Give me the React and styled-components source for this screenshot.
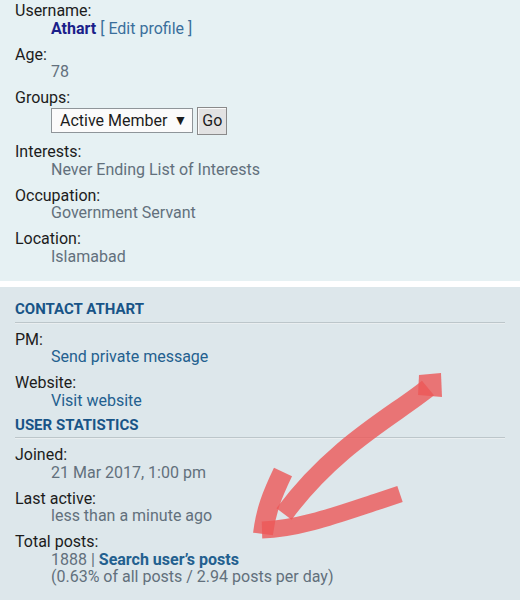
import styled, {createGlobalStyle} from 'styled-components';

const GlobalStyle = createGlobalStyle`
  html, body {
    margin: 0;
    padding: 0;
    background: #ffffff;
  }
  body {
    font-family: Roboto, "Noto Sans", "Liberation Sans", sans-serif;
    font-size: 16px;
    color: #1c1c1c;
  }
`;

const Page = styled.div`
  position: relative;
  width: 520px;
  height: 600px;
  overflow: hidden;
`;

const Panel = styled.div`
  background: ${(p) => p.$tone === 'dark' ? '#dde7eb' : '#e6f1f3'};
  padding: ${(p) => p.$tone === 'dark' ? '14px 15px 14px' : '2px 15px 16px'};
  margin-bottom: 6px;
`;

const List = styled.dl`
  margin: 0;
  line-height: 17.5px;
`;

const Label = styled.dt`
  color: #1c1c1c;
`;

const Value = styled.dd`
  margin: 0 0 8.5px 36px;
  color: #62707c;
  &:last-child {
    margin-bottom: 0;
  }
`;

const Heading = styled.h3`
  margin: ${(p) => p.$first ? '0' : '7.5px'} 0 8px;
  padding-bottom: 3px;
  font-size: 15px;
  line-height: 17.5px;
  font-weight: 700;
  text-transform: uppercase;
  color: #185487;
  border-bottom: 1px solid #bcc6ca;
  box-shadow: 0 1px 0 #e9eef0;
`;

const UserName = styled.span`
  font-weight: 700;
  color: #1b1f8a;
`;

const Link = styled.a`
  color: ${(p) => p.$light ? '#3a6f9c' : '#23608f'};
  font-weight: ${(p) => p.$bold ? 700 : 400};
  text-decoration: none;
`;

const Row = styled.div`
  display: flex;
  align-items: center;
  gap: 4px;
  height: 28px;
`;

const Select = styled.div`
  display: flex;
  align-items: center;
  gap: 6px;
  height: 25px;
  box-sizing: border-box;
  padding: 0 5px 0 8px;
  background: #fbfbfb;
  border: 1px solid #8f9599;
  color: #1c1c1c;
  font-size: 16px;
`;

const Caret = styled.span`
  font-size: 14px;
`;

const GoButton = styled.button`
  height: 28px;
  padding: 0 4px;
  font-family: inherit;
  font-size: 16px;
  color: #1c1c1c;
  background: #e2e2e2;
  border: 1px solid #8a8a8a;
  box-shadow: inset 1px 1px 0 #fafafa;
`;

const Overlay = styled.svg`
  position: absolute;
  left: 0;
  top: 0;
  pointer-events: none;
`;

const Field = ({label, children}) => (
    <>
        <Label>{label}</Label>
        <Value>{children}</Value>
    </>
);

const ARROW = 'rgba(236, 88, 88, 0.8)';

const App = () => {
    return (
        <Page>
            <GlobalStyle />
            <Panel>
                <List>
                    <Field label="Username:">
                        <UserName>Athart</UserName>{' '}
                        <Link $light href="#">[ Edit profile ]</Link>
                    </Field>
                    <Field label="Age:">78</Field>
                    <Label>Groups:</Label>
                    <Value>
                        <Row>
                            <Select>
                                <span>Active Member</span>
                                <Caret>▼</Caret>
                            </Select>
                            <GoButton>Go</GoButton>
                        </Row>
                    </Value>
                    <Field label="Interests:">Never Ending List of Interests</Field>
                    <Field label="Occupation:">Government Servant</Field>
                    <Field label="Location:">Islamabad</Field>
                </List>
            </Panel>
            <Panel $tone="dark">
                <Heading $first>Contact Athart</Heading>
                <List>
                    <Field label="PM:"><Link href="#">Send private message</Link></Field>
                    <Field label="Website:"><Link href="#">Visit website</Link></Field>
                </List>
                <Heading>User statistics</Heading>
                <List>
                    <Field label="Joined:">21 Mar 2017, 1:00 pm</Field>
                    <Field label="Last active:">less than a minute ago</Field>
                    <Label>Total posts:</Label>
                    <Value>
                        1888 | <Link $bold href="#">Search user’s posts</Link>
                        <br />
                        (0.63% of all posts / 2.94 posts per day)
                    </Value>
                </List>
            </Panel>
            <Overlay width="520" height="600" viewBox="0 0 520 600">
                <polygon points="419,375 441,373 442,397 418,395" fill={ARROW} />
                <path d="M 428 388 C 395 415, 335 445, 284 514" stroke={ARROW} strokeWidth="19" fill="none" />
                <path d="M 283 472 C 272 495, 266 510, 263 534" stroke={ARROW} strokeWidth="20" fill="none" />
                <path d="M 262 530 C 300 529, 345 512, 376 502 L 400 494" stroke={ARROW} strokeWidth="17" fill="none" />
            </Overlay>
        </Page>
    );
};

export default App;
